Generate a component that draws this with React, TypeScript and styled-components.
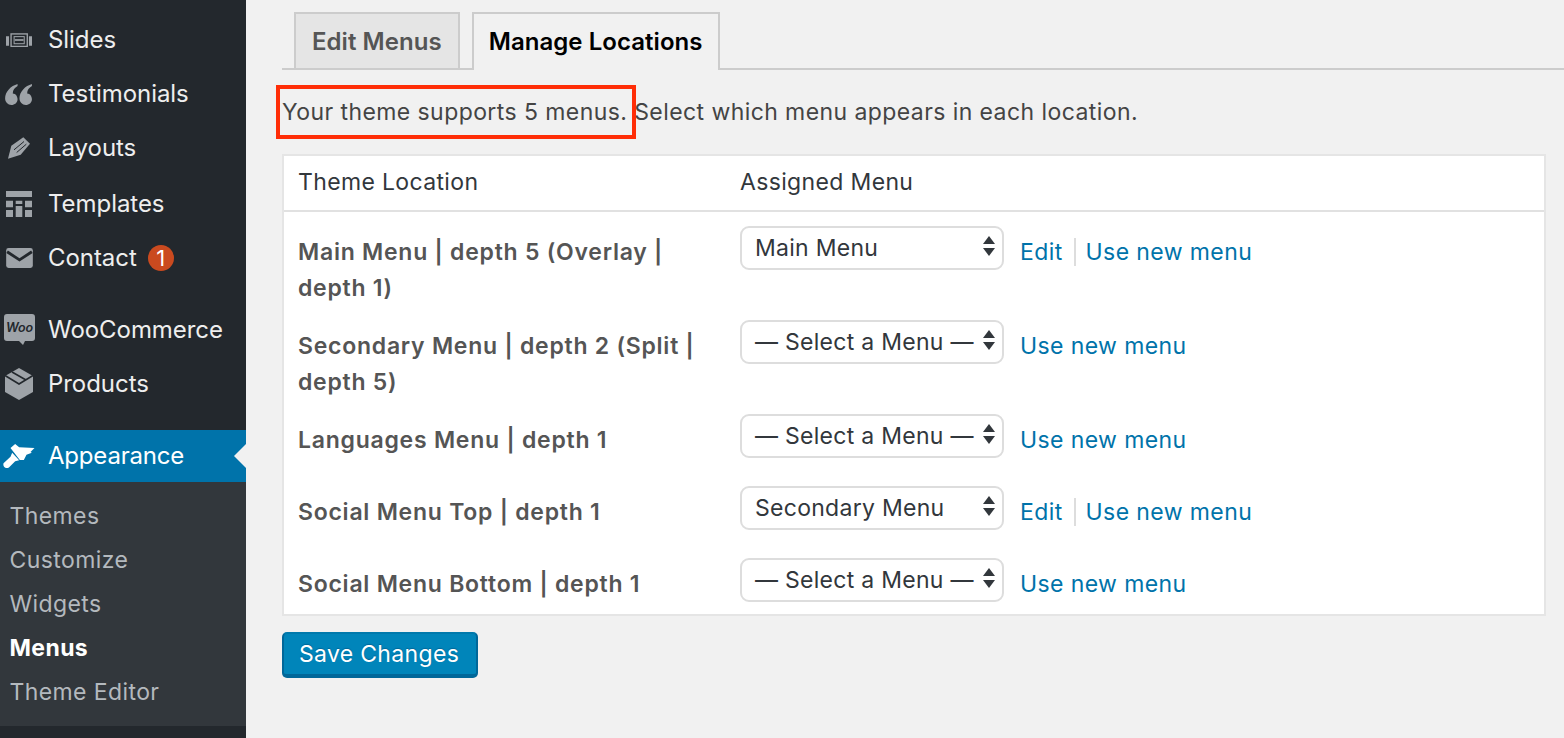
import React from 'react';
import styled, { createGlobalStyle } from 'styled-components';

const GlobalStyle = createGlobalStyle`
  html, body {
    margin: 0;
    padding: 0;
    height: 100%;
    overflow: hidden;
    background: #f1f1f1;
  }
  * { box-sizing: border-box; }
  body {
    font-family: Inter, "Liberation Sans", sans-serif;
    -webkit-font-smoothing: antialiased;
  }
`;

const Page = styled.div`
  display: flex;
  width: 1564px;
  height: 738px;
  overflow: hidden;
`;

/* Sidebar */
const Sidebar = styled.nav`
  flex: 0 0 246px;
  height: 738px;
  background: #23282d;
  padding-top: 13px;
`;

const MenuRow = styled.div<{ $mt?: number }>`
  display: flex;
  align-items: center;
  height: 54px;
  margin-top: ${p => p.$mt || 0}px;
  color: #eee;
  font-size: 24px;
  letter-spacing: -0.05px;
`;

const MenuText = styled.span`
  margin-bottom: 2px;
`;

const IconSlot = styled.span`
  flex: 0 0 48px;
  display: flex;
  justify-content: center;
  padding-right: 10px;
  svg { display: block; }
`;

const Badge = styled.span`
  width: 26px;
  height: 26px;
  margin-left: 11px;
  border-radius: 50%;
  background: #ca4a1f;
  color: #fff;
  font-size: 22px;
  line-height: 26px;
  text-align: center;
`;

const CurrentRow = styled.div`
  position: relative;
  display: flex;
  align-items: center;
  height: 52px;
  margin-top: 19px;
  background: #0073aa;
  color: #fff;
  font-size: 24px;
  letter-spacing: -0.2px;
  &::after {
    content: '';
    position: absolute;
    right: 0;
    top: 14px;
    border: 12px solid transparent;
    border-left-width: 0;
    border-right-color: #f1f1f1;
  }
`;

const Submenu = styled.div`
  background: #32373c;
  padding: 12px 0;
`;

const SubItem = styled.div<{ $active?: boolean }>`
  height: 44px;
  padding-left: 9.500px;
  line-height: 44px;
  font-size: 23px;
  letter-spacing: 0.4px;
  font-weight: ${p => (p.$active ? 700 : 400)};
  color: ${p => (p.$active ? '#fff' : '#b4b9be')};
`;

/* Main */
const Main = styled.main`
  flex: 1;
  padding: 12px 18px 0 36px;
`;

const Tabs = styled.div`
  display: flex;
  gap: 12px;
  height: 58px;
  padding-left: 12px;
  margin-right: -18px;
  border-bottom: 2px solid #ccc;
`;

const Tab = styled.div<{ $active?: boolean }>`
  height: ${p => (p.$active ? 58 : 56)}px;
  padding: 0 ${p => (p.$active ? 15 : 16)}px;
  border: 2px solid #ccc;
  border-bottom: 0;
  background: ${p => (p.$active ? '#f1f1f1' : '#e5e5e5')};
  color: ${p => (p.$active ? '#000' : '#555')};
  font-size: 24px;
  font-weight: 600;
  letter-spacing: 0.05px;
  line-height: 55px;
`;

const Intro = styled.p`
  margin: 0;
  height: 84px;
  padding-top: 24px;
  color: #444;
  font-size: 23px;
  letter-spacing: 0.42px;
  line-height: 36px;
  white-space: nowrap;
`;

const Highlight = styled.span`
  position: relative;
  &::after {
    content: '';
    position: absolute;
    left: -6px;
    right: -9px;
    top: -13px;
    bottom: -13px;
    border: 4px solid #ff2d07;
  }
`;

const Table = styled.section`
  width: 1264px;
  background: #fff;
  border: 2px solid #e5e5e5;
`;

const HeadRow = styled.div`
  display: grid;
  grid-template-columns: 442px 1fr;
  height: 56px;
  padding-left: 14px;
  border-bottom: 2px solid #e1e1e1;
  color: #32373c;
  font-size: 23px;
  letter-spacing: 0.35px;
  line-height: 52px;
`;

const Row = styled.div`
  display: grid;
  grid-template-columns: 442px 1fr;
  min-height: 72px;
  padding-left: 14px;
  &:last-child { min-height: 70px; }
`;

const Label = styled.div`
  padding: 22px 40px 0 0;
  color: #555;
  font-size: 23px;
  font-weight: 600;
  letter-spacing: 0.75px;
  line-height: 36px;
`;

const Control = styled.div`
  display: flex;
  align-items: flex-start;
  padding-top: 14px;
`;

const Select = styled.div`
  position: relative;
  width: 264px;
  height: 44px;
  padding-left: 13px;
  border: 2px solid #ddd;
  border-radius: 9px;
  background: #fff;
  color: #32373c;
  font-size: 23px;
  letter-spacing: 0.28px;
  line-height: 40px;
  white-space: nowrap;
  svg {
    position: absolute;
    right: 7px;
    top: 8px;
  }
`;

const Links = styled.div`
  display: flex;
  align-items: center;
  height: 36px;
  margin: 8px 0 0 16px;
  font-size: 23px;
  letter-spacing: 0.4px;
`;

const Link = styled.a`
  color: #0073aa;
  text-decoration: none;
`;

const Pipe = styled.span`
  width: 2px;
  height: 28px;
  margin: 0 10px 0 11px;
  background: #ddd;
`;

const SaveButton = styled.button`
  display: block;
  width: 196px;
  height: 46px;
  margin-top: 16px;
  padding: 0 2px 0 0;
  border: 2px solid #006799;
  border-top-color: #0079ac;
  border-bottom-width: 4px;
  border-radius: 5px;
  background: #0085ba;
  color: #fff;
  font-family: inherit;
  font-size: 23px;
  letter-spacing: 0.33px;
  text-shadow: 0 -1px 1px #006799;
`;

const Arrows = () => (
  <svg width="12" height="20" viewBox="0 0 12 20">
    <path d="M6 0 L12 8 H0 Z M0 12 H12 L6 20 Z" fill="#32373c" />
  </svg>
);

const SlidesIcon = () => (
  <svg width="26" height="14" viewBox="18 12 77 40">
    <path d="M18 21h9v28h-9zM86 21h9v28h-9z" fill="#9ea3a8" />
    <rect x="33" y="14" width="48" height="37" fill="none" stroke="#9ea3a8" strokeWidth="4" />
    <rect x="42" y="22" width="30" height="21" fill="none" stroke="#9ea3a8" strokeWidth="3" />
    <path d="M44 32h26" stroke="#9ea3a8" strokeWidth="5" />
  </svg>
);

const QuotesIcon = () => (
  <svg width="28" height="23" viewBox="0 0 29 24" fill="#9ea3a8">
    <path d="M13 1C6 3 0 9 0 16c0 4 3 7 6.500 7S13 20.500 13 17c0-3-2-6-5-6 0-4 2-6 5-8zM28 1c-7 2-13 8-13 15 0 4 3 7 6.500 7s6.500-2.500 6.500-6c0-3-2-6-5-6 0-4 2-6 5-8z" />
  </svg>
);

const PencilIcon = () => (
  <svg width="22" height="22" viewBox="24 417 66 65">
    <path d="M24 482 L34 443 L70 417 L90 437 L62 470 Z" fill="#9ea3a8" />
    <path d="M42 455 L72 430 M50 463 L79 438" stroke="#23282d" strokeWidth="3" fill="none" />
  </svg>
);

const TemplatesIcon = () => (
  <svg width="26" height="26" viewBox="0 0 26 26" fill="#9ea3a8">
    <path d="M0 0h26v6H0zM0 9.700h7v6.600H0zM9.700 9.700h6.600v3.400H9.700zM19 9.700h7v6.600h-7zM0 19h7v7H0zM9.700 15h6.600v11H9.700zM19 19h7v7h-7z" />
  </svg>
);

const MailIcon = () => (
  <svg width="27" height="20" viewBox="0 0 28 21">
    <rect width="28" height="21" rx="2.500" fill="#9ea3a8" />
    <path d="M1 4l13 8.500L27 4" fill="none" stroke="#23282d" strokeWidth="3" />
  </svg>
);

const WooIcon = () => (
  <svg width="31" height="32" viewBox="0 0 31 32">
    <path d="M3 0h25a3 3 0 0 1 3 3v21a3 3 0 0 1-3 3h-7l-2 4-4-4H3a3 3 0 0 1-3-3V3a3 3 0 0 1 3-3z" fill="#9ea3a8" />
    <text x="15.500" y="18" textAnchor="middle" fontFamily="Inter, sans-serif" fontSize="12.500" fontStyle="italic" fontWeight="600" fill="#23282d">Woo</text>
  </svg>
);

const BoxIcon = () => (
  <svg width="28" height="32" viewBox="0 0 28 32">
    <path d="M14 0 L28 8 V24 L14 32 L0 24 V8 Z" fill="#9ea3a8" />
    <path d="M0 7.500 L14 16 L28 7.500 M7 4 L21 12" fill="none" stroke="#23282d" strokeWidth="1.600" />
  </svg>
);

const BrushIcon = () => (
  <svg width="32" height="24" viewBox="10 26 95 72" fill="#fff">
    <path d="M32 38 L46 26 L58 36 L104 38 L92 50 L96 52 L80 58 L72 74 L60 74 Z" />
    <path d="M37 52 L58 75 L46 78 L28 96 C20 102 8 96 11 84 L32 64 Z" />
  </svg>
);

const mainMenus: { icon: React.ReactNode; label: string; mt?: number; badge?: string }[] = [
  { icon: <SlidesIcon />, label: 'Slides' },
  { icon: <QuotesIcon />, label: 'Testimonials' },
  { icon: <PencilIcon />, label: 'Layouts' },
  { icon: <TemplatesIcon />, label: 'Templates', mt: 2 },
  { icon: <MailIcon />, label: 'Contact', badge: '1' },
  { icon: <WooIcon />, label: 'WooCommerce', mt: 18 },
  { icon: <BoxIcon />, label: 'Products' },
];

const subItems = ['Themes', 'Customize', 'Widgets', 'Menus', 'Theme Editor'];

const locations = [
  { label: 'Main Menu | depth 5 (Overlay | depth 1)', value: 'Main Menu', edit: true },
  { label: 'Secondary Menu | depth 2 (Split | depth 5)', value: '— Select a Menu —', edit: false },
  { label: 'Languages Menu | depth 1', value: '— Select a Menu —', edit: false },
  { label: 'Social Menu Top | depth 1', value: 'Secondary Menu', edit: true },
  { label: 'Social Menu Bottom | depth 1', value: '— Select a Menu —', edit: false },
];

const App: React.FC = () => {
  return (
    <Page>
      <GlobalStyle />
      <Sidebar>
        {mainMenus.map(m => (
          <MenuRow key={m.label} $mt={m.mt}>
            <IconSlot>{m.icon}</IconSlot>
            <MenuText>{m.label}</MenuText>
            {m.badge && <Badge>{m.badge}</Badge>}
          </MenuRow>
        ))}
        <CurrentRow>
          <IconSlot><BrushIcon /></IconSlot>
          <MenuText>Appearance</MenuText>
        </CurrentRow>
        <Submenu>
          {subItems.map(s => (
            <SubItem key={s} $active={s === 'Menus'}>{s}</SubItem>
          ))}
        </Submenu>
      </Sidebar>

      <Main>
        <Tabs>
          <Tab>Edit Menus</Tab>
          <Tab $active>Manage Locations</Tab>
        </Tabs>
        <Intro>
          <Highlight>Your theme supports 5 menus.</Highlight> Select which menu appears in each location.
        </Intro>
        <Table>
          <HeadRow>
            <div>Theme Location</div>
            <div>Assigned Menu</div>
          </HeadRow>
          {locations.map(l => (
            <Row key={l.label}>
              <Label>{l.label}</Label>
              <Control>
                <Select>
                  {l.value}
                  <Arrows />
                </Select>
                <Links>
                  {l.edit && (
                    <>
                      <Link href="#">Edit</Link>
                      <Pipe />
                    </>
                  )}
                  <Link href="#">Use new menu</Link>
                </Links>
              </Control>
            </Row>
          ))}
        </Table>
        <SaveButton>Save Changes</SaveButton>
      </Main>
    </Page>
  );
};

export default App;
